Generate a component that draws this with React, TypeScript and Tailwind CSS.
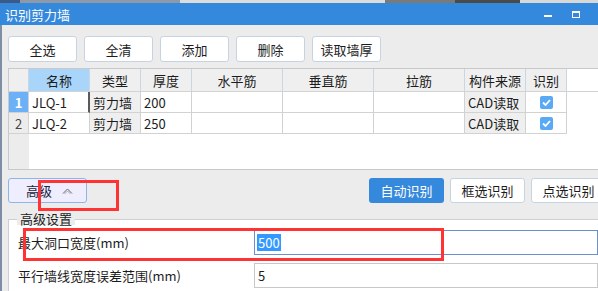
import React from "react";

const topButtons = ["全选", "全清", "添加", "删除", "读取墙厚"];

const cols = [
  { title: "", w: "w-[20px]" },
  { title: "名称", w: "w-[61px]" },
  { title: "类型", w: "w-[51px]" },
  { title: "厚度", w: "w-[51px]" },
  { title: "水平筋", w: "w-[91px]" },
  { title: "垂直筋", w: "w-[91px]" },
  { title: "拉筋", w: "w-[91px]" },
  { title: "构件来源", w: "w-[61px]" },
  { title: "识别", w: "w-[41px]" },
];

const rows = [
  { no: "1", name: "JLQ-1", type: "剪力墙", thick: "200", src: "CAD读取", active: true },
  { no: "2", name: "JLQ-2", type: "剪力墙", thick: "250", src: "CAD读取", active: false },
];

const Check = () => (
  <span className="flex h-[13px] w-[13px] items-center justify-center rounded-[2px] bg-[#5aa9f5]">
    <svg width="9" height="7" viewBox="0 0 9 7">
      <path d="M1 3.5 L3.5 6 L8 1" fill="none" stroke="#fff" strokeWidth="1.8" />
    </svg>
  </span>
);

const App = () => {
  return (
    <div className="relative h-[291px] w-[598px] overflow-hidden bg-[#ececec] text-[13px] leading-none text-[#1c1c1c] font-['Noto_Sans_CJK_SC',sans-serif]">
      {/* window behind */}
      <div className="flex h-[3px]">
        <div className="w-[20px] bg-[#3d5a86]" />
        <div className="w-[160px] bg-[#8d98a8]" />
        <div className="w-[205px] bg-[#dcdcdc]" />
        <div className="w-[70px] bg-[#7a7a7a]" />
        <div className="w-[65px] bg-[#4a4a4a]" />
        <div className="flex-1 bg-[#d8d8d8]" />
      </div>

      {/* title bar */}
      <div className="flex h-[22px] items-center justify-between bg-[#3589dc] pl-[5px] pr-[18px] text-white">
        <span className="text-[13px]">识别剪力墙</span>
        <div className="flex items-center gap-[20px]">
          <span className="mt-[4px] h-[2px] w-[8px] bg-white" />
          <span className="h-[7px] w-[8px] border border-t-2 border-white" />
        </div>
      </div>

      <div className="flex border-l-2 border-[#7d8ea4]">
        <div className="flex-1 pl-[6px]">
          {/* toolbar */}
          <div className="flex gap-[7px] pt-[11px]">
            {topButtons.map((b) => (
              <button
                key={b}
                className="flex h-[26px] w-[69px] items-center justify-center rounded-[3px] border border-[#c6d3e3] bg-white"
              >
                {b}
              </button>
            ))}
          </div>

          {/* grid */}
          <div className="mt-[6px] flex h-[102px] flex-col border-y border-l border-[#c9c9c9] bg-white">
            <div className="flex h-[23px] border-b border-[#d2d2d2]">
              {cols.map((c, i) => (
                <div
                  key={i}
                  className={`${c.w} flex shrink-0 items-center justify-center border-r border-[#c8d6e6] ${
                    i === 1 ? "bg-[#a9d5fb]" : "bg-[#efefef]"
                  }`}
                >
                  {c.title}
                </div>
              ))}
              <div className="flex-1 bg-white" />
            </div>
            {rows.map((r) => (
              <div key={r.no} className="flex h-[21px]">
                <div
                  className={`flex w-[20px] shrink-0 items-center justify-center border-r border-b ${
                    r.active
                      ? "border-[#d2d2d2] bg-[#6cb1f7] font-bold text-white"
                      : "border-[#d2d2d2] bg-[#ececec] text-[#444]"
                  }`}
                >
                  {r.no}
                </div>
                <div
                  className={`flex w-[61px] shrink-0 items-center border-b border-[#d2d2d2] pl-[3px] ${
                    r.active ? "border-r-2 border-r-[#5a5a5a]" : "border-r"
                  }`}
                >
                  {r.name}
                </div>
                <div className="flex w-[51px] shrink-0 items-center border-r border-b border-[#d2d2d2] bg-[#efefef] pl-[3px]">
                  {r.type}
                </div>
                <div className="flex w-[51px] shrink-0 items-center border-r border-b border-[#d2d2d2] pl-[3px]">
                  {r.thick}
                </div>
                <div className="w-[91px] shrink-0 border-r border-b border-[#d2d2d2]" />
                <div className="w-[91px] shrink-0 border-r border-b border-[#d2d2d2]" />
                <div className="w-[91px] shrink-0 border-r border-b border-[#d2d2d2]" />
                <div className="flex w-[61px] shrink-0 items-center border-r border-b border-[#d2d2d2] bg-[#efefef] pl-[3px]">
                  {r.src}
                </div>
                <div className="flex w-[41px] shrink-0 items-center justify-center border-r border-b border-[#d2d2d2]">
                  <Check />
                </div>
                <div className="flex-1" />
              </div>
            ))}
            <div className="flex flex-1">
              <div className="w-[20px] bg-[#ececec]" />
              <div className="flex-1 bg-white" />
            </div>
          </div>

          {/* action bar */}
          <div className="mr-[-8px] mt-[8px] flex h-[25px] items-center">
            <button className="flex h-[25px] w-[79px] items-center justify-center gap-[10px] rounded-[3px] border border-[#8db5ea] bg-[#eeeeff] pl-[4px] text-[#22223a]">
              高级
              <svg width="11" height="8" viewBox="0 0 11 8">
                <path d="M1 6.5 L5.5 2 L10 6.5" fill="none" stroke="#666" strokeWidth="1" />
                <path d="M2.5 7 L5.5 4 L8.5 7" fill="none" stroke="#999" strokeWidth="0.8" />
              </svg>
            </button>
            <div className="flex-1" />
            <div className="flex gap-[6px]">
              <button className="flex h-[25px] w-[75px] items-center justify-center rounded-[3px] bg-[#3589dc] text-white">
                自动识别
              </button>
              <button className="flex h-[25px] w-[75px] items-center justify-center rounded-[3px] border border-[#c6d3e3] bg-white">
                框选识别
              </button>
              <button className="flex h-[25px] w-[75px] items-center justify-center rounded-[3px] border border-[#c6d3e3] bg-white">
                点选识别
              </button>
            </div>
          </div>

          {/* group box */}
          <div className="relative mr-[-4px] mt-[16px] border-l border-t border-[#cfcfcf] bg-white pb-[4px] pl-[9px] pr-[4px] pt-[10px]">
            <span className="absolute left-[8px] top-[-8px] bg-[#ececec] px-[3px]">高级设置</span>
            <div className="flex h-[25px] items-center">
              <span className="w-[236px]">最大洞口宽度(mm)</span>
              <div className="flex h-[25px] flex-1 items-center border border-[#6b8fd1] pl-[2px]">
                <span className="bg-[#3399ff] px-[1px] py-[2px] text-white">500</span>
              </div>
            </div>
            <div className="mt-[8px] flex h-[25px] items-center">
              <span className="w-[236px]">平行墙线宽度误差范围(mm)</span>
              <div className="flex h-[25px] flex-1 items-center border border-[#c8c8c8] pl-[3px]">5</div>
            </div>
          </div>
        </div>
      </div>

      {/* annotations */}
      <div className="absolute left-[38px] top-[180px] h-[31px] w-[81px] border-[3px] border-[#ff3333]" />
      <div className="absolute left-[23px] top-[228px] h-[33px] w-[421px] border-[3px] border-[#ff3333]" />
    </div>
  );
};

export default App;
